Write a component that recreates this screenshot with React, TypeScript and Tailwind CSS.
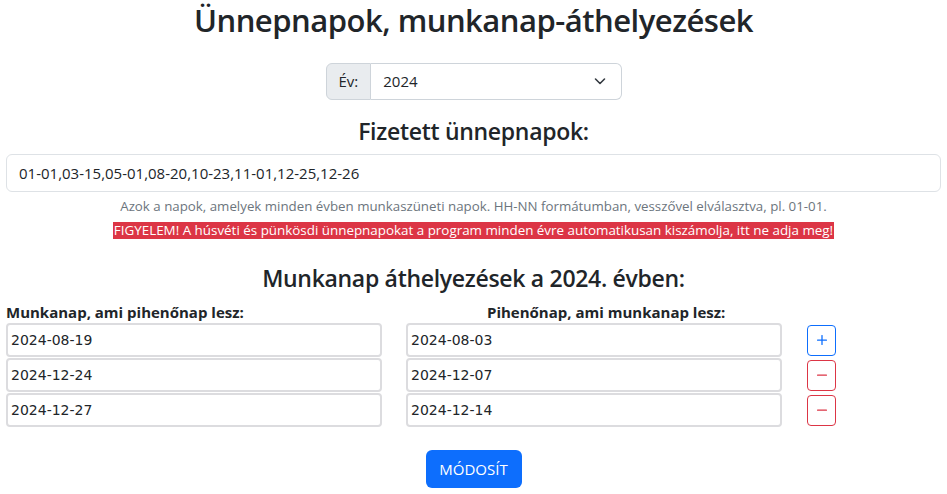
import { useState } from "react";

const font = { fontFamily: '"Open Sans", "Noto Sans", sans-serif' };

function MinusIcon() {
  return (
    <svg width="16" height="16" viewBox="0 0 16 16" fill="currentColor">
      <rect x="3" y="7.4" width="10" height="1.3" rx="0.5" />
    </svg>
  );
}

function PlusIcon() {
  return (
    <svg width="16" height="16" viewBox="0 0 16 16" fill="currentColor">
      <rect x="3" y="7.4" width="10" height="1.3" rx="0.5" />
      <rect x="7.35" y="3" width="1.3" height="10" rx="0.5" />
    </svg>
  );
}

export default function App() {
  const [year, setYear] = useState("2024");
  const [holidays, setHolidays] = useState("01-01,03-15,05-01,08-20,10-23,11-01,12-25,12-26");
  const rows = [
    ["2024-08-19", "2024-08-03"],
    ["2024-12-24", "2024-12-07"],
    ["2024-12-27", "2024-12-14"],
  ];

  return (
    <div className="min-h-screen bg-white text-[#212529]" style={font}>
      <div className="px-[6px] flex flex-col items-center">
        <h2 className="text-[31px] font-semibold leading-[1.2] mt-[2px] tracking-[-0.5px]">Ünnepnapok, munkanap-áthelyezések</h2>

        {/* Year selector */}
        <div className="flex mt-[24px] h-[37px] w-[296px]">
          <span className="flex items-center px-[12px] bg-[#e9ecef] border border-[#ced4da] rounded-l-[6px] text-[15px]">Év:</span>
          <div className="relative flex-1">
            <select
              value={year}
              onChange={(e) => setYear(e.target.value)}
              className="w-full h-full appearance-none border border-l-0 border-[#ced4da] rounded-r-[6px] pl-[12px] text-[15px] bg-white"
            >
              <option>2023</option>
              <option>2024</option>
              <option>2025</option>
            </select>
            <svg className="absolute right-[16px] top-[14px] pointer-events-none" width="12" height="9" viewBox="0 0 12 9" fill="none" stroke="#343a40" strokeWidth="1.6" strokeLinecap="round" strokeLinejoin="round">
              <path d="M1.5 2l4.5 4.5L10.5 2" />
            </svg>
          </div>
        </div>

        <h4 className="text-[23px] font-semibold leading-[1.2] mt-[18px] tracking-[-0.3px]">Fizetett ünnepnapok:</h4>
        <input
          value={holidays}
          onChange={(e) => setHolidays(e.target.value)}
          className="w-full mt-[8px] h-[38px] border border-[#dee2e6] rounded-[6px] px-[12px] text-[15px] outline-none"
        />
        <div className="mt-[5px] text-[13.3px] text-[#6c757d]">
          Azok a napok, amelyek minden évben munkaszüneti napok. HH-NN formátumban, vesszővel elválasztva, pl. 01-01.
        </div>
        <div className="mt-[5px] bg-[#dc3545] text-white text-[13.4px] leading-[17px] px-[1px]">
          FIGYELEM! A húsvéti és pünkösdi ünnepnapokat a program minden évre automatikusan kiszámolja, itt ne adja meg!
        </div>

        <h4 className="text-[23px] font-semibold leading-[1.2] mt-[26px] tracking-[-0.3px]">Munkanap áthelyezések a 2024. évben:</h4>

        <div className="w-full mt-[10px] grid grid-cols-[376px_376px_auto] gap-x-[24px] gap-y-[1px] items-center">
          <div className="text-[15px] font-bold leading-[20px]">Munkanap, ami pihenőnap lesz:</div>
          <div className="text-[15px] font-bold leading-[20px] pl-[81px]">Pihenőnap, ami munkanap lesz:</div>
          <div />
          {rows.map(([a, b], i) => (
            <div key={i} className="contents">
              <input defaultValue={a} className="h-[34px] border-2 border-[#dcdcdf] rounded-[4px] px-[3px] outline-none" style={{ fontFamily: '"DejaVu Sans", Verdana, sans-serif', fontSize: 14 }} />
              <input defaultValue={b} className="h-[34px] border-2 border-[#dcdcdf] rounded-[4px] px-[3px] outline-none" style={{ fontFamily: '"DejaVu Sans", Verdana, sans-serif', fontSize: 14 }} />
              <div className="pl-[1px]">
                {i === 0 ? (
                  <button className="w-[29px] h-[31px] flex items-center justify-center border border-[#0d6efd] text-[#0d6efd] rounded-[4px]">
                    <PlusIcon />
                  </button>
                ) : (
                  <button className="w-[29px] h-[31px] flex items-center justify-center border border-[#dc3545] text-[#dc3545] rounded-[4px]">
                    <MinusIcon />
                  </button>
                )}
              </div>
            </div>
          ))}
        </div>

        <button className="mt-[23px] bg-[#0d6efd] text-white text-[15px] rounded-[6px] px-[12px] h-[38px] w-[96px]">MÓDOSÍT</button>
      </div>
    </div>
  );
}
